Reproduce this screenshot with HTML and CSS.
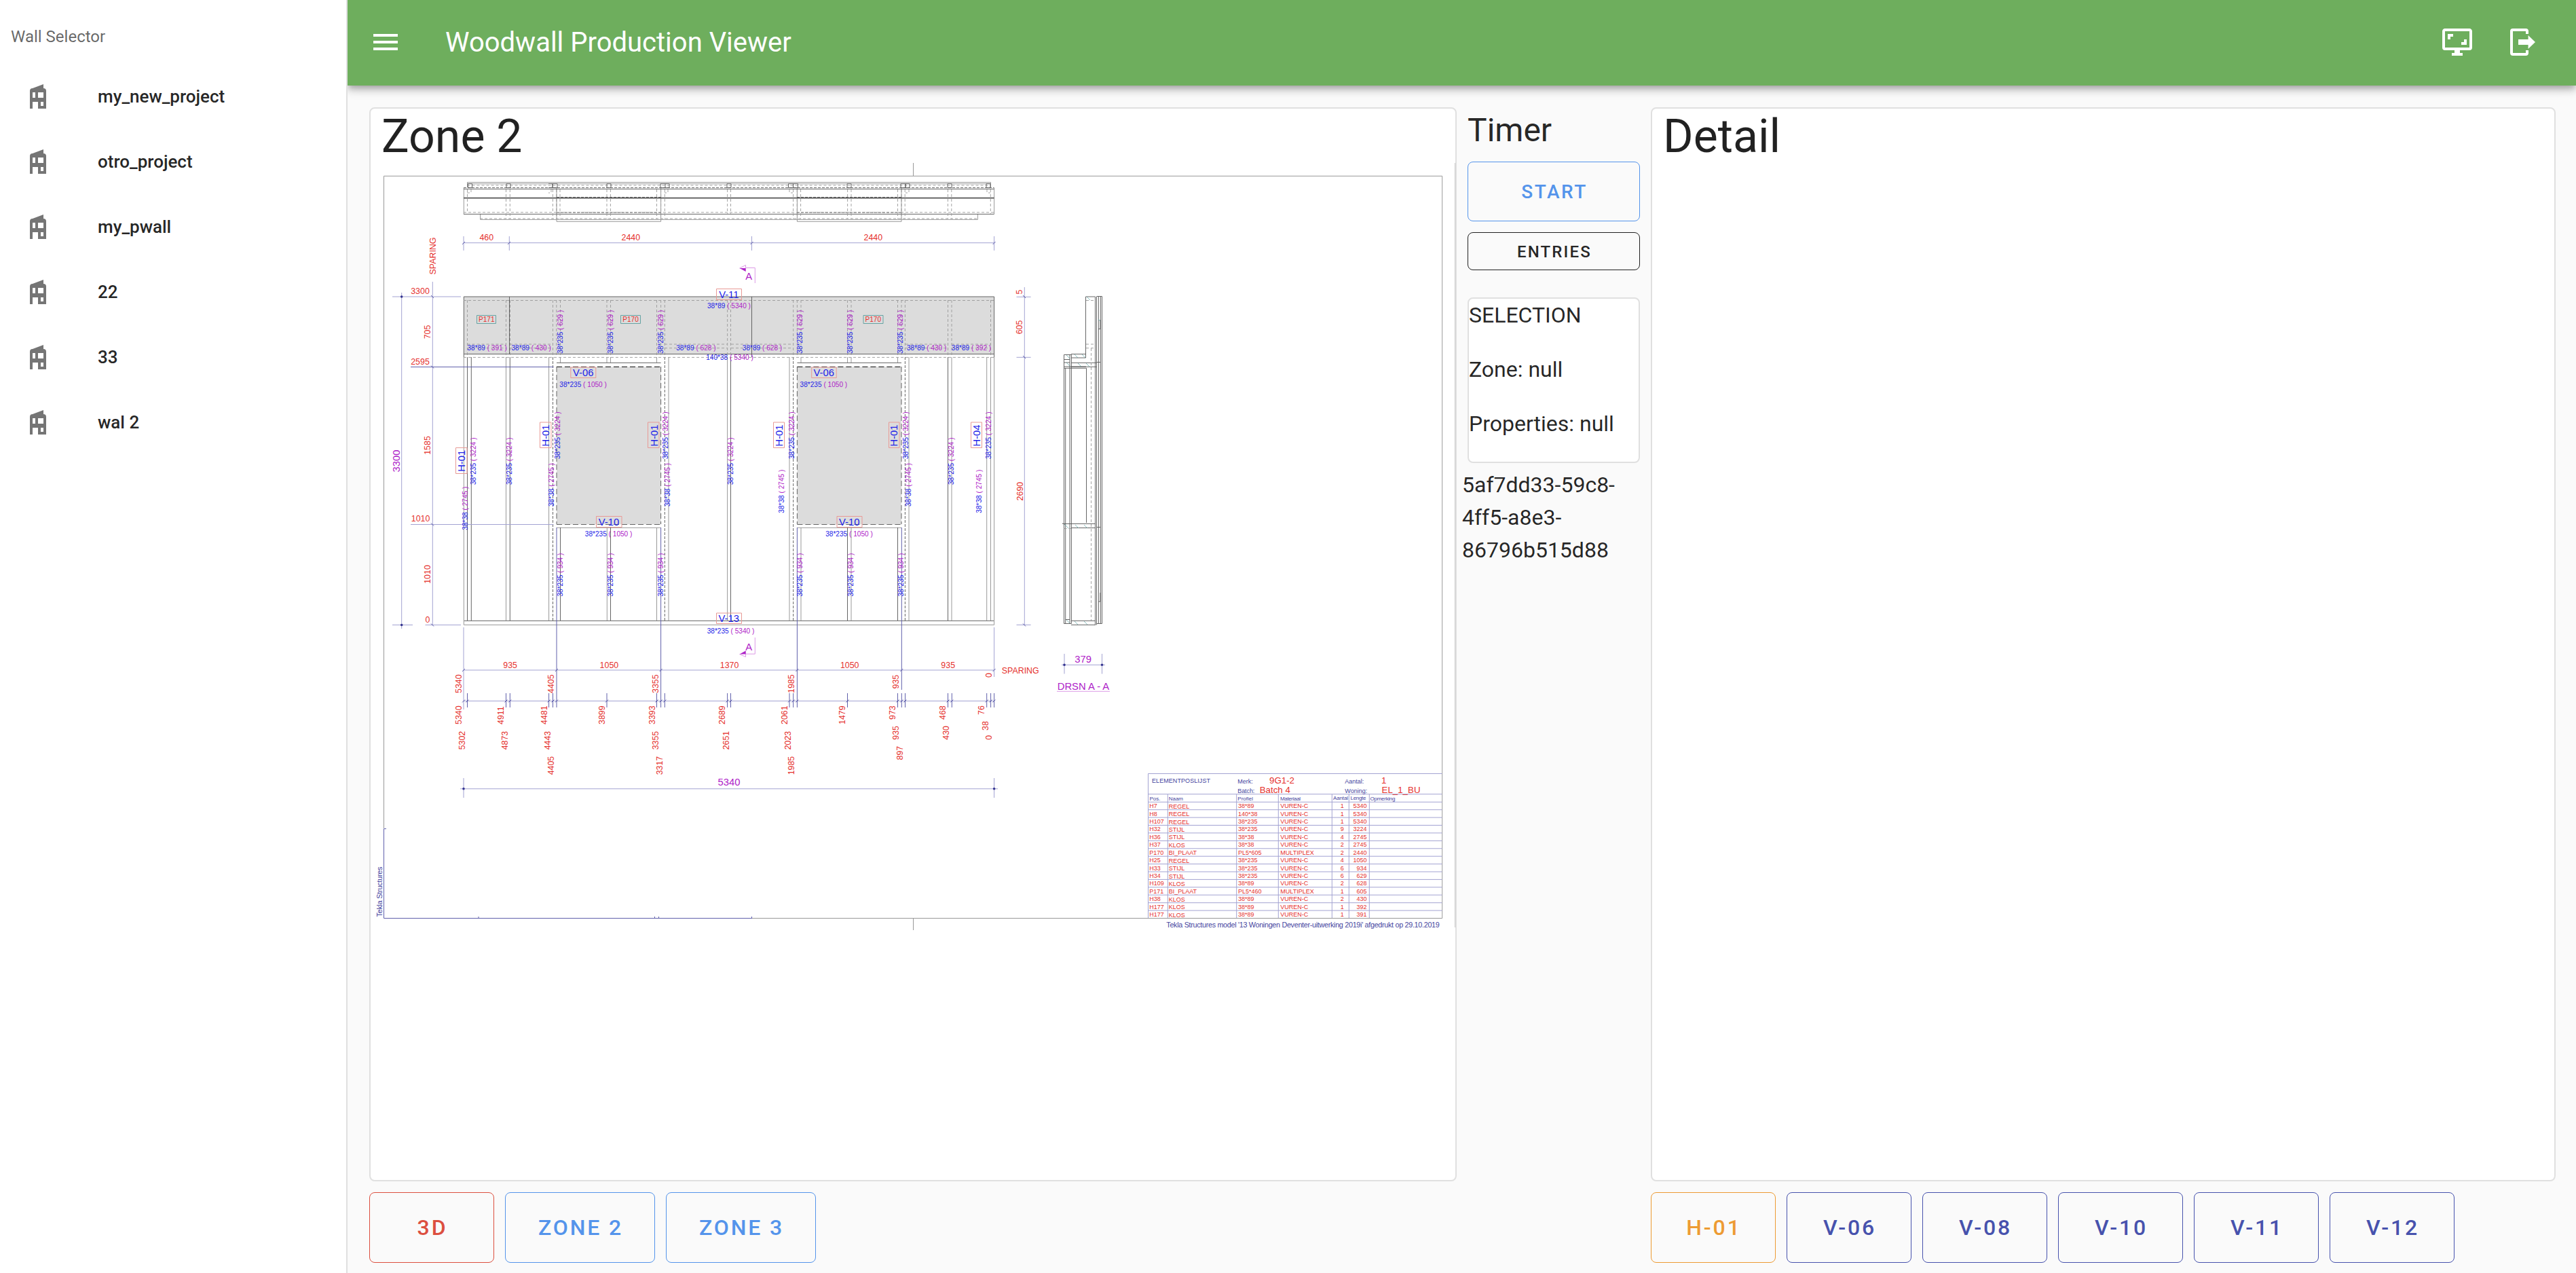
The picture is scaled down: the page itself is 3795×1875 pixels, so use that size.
FILE: index.html
```html
<!DOCTYPE html>
<html lang="en">
<head>
<meta charset="utf-8">
<title>Woodwall Production Viewer</title>
<link rel="stylesheet" href="styles.css">
</head>
<body>
<svg class="defs" aria-hidden="true">
  <symbol id="i-home" viewBox="0 0 24 24"><path d="M6,21V8A2,2 0 0,1 8,6L16,3V6A2,2 0 0,1 18,8V21H12V16H8V21H6M14,19H16V16H14V19M8,13H10V9H8V13M12,13H16V9H12V13Z"/></symbol>
</svg>
<div class="app">
  <aside class="drawer">
    <h2 class="drawer-title">Wall Selector</h2>
    <nav class="walls">
      <a class="wall"><svg class="icon"><use href="#i-home"/></svg><span>my_new_project</span></a>
      <a class="wall"><svg class="icon"><use href="#i-home"/></svg><span>otro_project</span></a>
      <a class="wall"><svg class="icon"><use href="#i-home"/></svg><span>my_pwall</span></a>
      <a class="wall"><svg class="icon"><use href="#i-home"/></svg><span>22</span></a>
      <a class="wall"><svg class="icon"><use href="#i-home"/></svg><span>33</span></a>
      <a class="wall"><svg class="icon"><use href="#i-home"/></svg><span>wal 2</span></a>
    </nav>
  </aside>
  <div class="page">
    <header class="bar">
      <svg class="icon" viewBox="0 0 24 24"><path d="M3,6H21V8H3V6M3,11H21V13H3V11M3,16H21V18H3V16Z"/></svg>
      <h1 class="bar-title">Woodwall Production Viewer</h1>
      <svg class="icon" viewBox="0 0 24 24"><path d="M9,6H5V10H7V8H9M19,10H17V12H15V14H19M21,16H3V4H21M21,2H3C1.89,2 1,2.89 1,4V16A2,2 0 0,0 3,18H10V20H8V22H16V20H14V18H21A2,2 0 0,0 23,16V4C23,2.89 22.1,2 21,2"/></svg>
      <svg class="icon" viewBox="0 0 24 24"><path d="M16.300,17V14H9V10H16.300V7L21.500,12L16.300,17M14.500,2A2,2 0 0,1 16.500,4V6H14.500V4H5V20H14.500V18H16.500V20A2,2 0 0,1 14.500,22H5A2,2 0 0,1 3,20V4A2,2 0 0,1 5,2H14.500Z"/></svg>
    </header>
    <main class="content">
      <section class="card">
        <h3 class="card-title">Zone 2</h3>
        <svg class="drawing" viewBox="546 240 1599 1130">
          <!-- sheet frame -->
          <path class="g" d="M565.5 1220V259.3H2124.7V1352.5H1107M1345.5 240V259M1345.5 1353V1370"/>
          <path class="edge" d="M2143.5 240V1366"/>
          <path class="n2" d="M569 1220.7H565.5V1352.5H1107M705 1350v3M964.5 1350v3M970.5 1350v3M1107.5 1350v3"/>
          <!-- panels and openings -->
          <path class="fill" d="M683.3 437H1464.6V521.3H683.3ZM820 540.3H973.6V772.5H820ZM1174.4 540.3H1328V772.5H1174.4Z"/>
          <!-- plan view -->
          <path class="g" d="M688.5 276V268.5H1459.5V276M688.5 270.8H1459.5M683.3 277V315.3M1464.6 277V315.3M707.6 315V323.4H1440.4V315M820 277V326.3H973.6V277M1174.4 277V326.3H1328V277"/>
          <path class="k" d="M683 278.4H1464.6M683 315.4H1464.6"/>
          <path class="kk" d="M683 291.7H1464.6"/>
          <path class="kd" d="M683 276.4H1464.6M820 290.5H973.6M1174 290.5H1328M820 313H973.6M1174 313H1328"/>
          <path class="gd" d="M683 312.8H1464.6M707 322H1440M688.5 273H1459M688.5 279V312M745.5 279V322M751.3 279V322M814.4 279V322M819.8 279V322M825 279V322M894 279V322M899.4 279V322M967.5 279V322M973.6 279V322M979.3 279V322M1071.6 279V315M1076.5 279V315M1168.6 279V322M1174.3 279V322M1179.6 279V322M1248.6 279V322M1254 279V322M1322.5 279V322M1328 279V322M1333.2 279V322M1396.4 279V322M1401.8 279V322M1459.3 279V315M694 279V284H688M812 279V284H808M984 279V284H979M1163 279V284H1168M1339 279V284H1334M1454 279V284H1459"/>
          <path class="k" d="M689.500 270.500h6v6h-6zM746 270.500h6v6h-6zM808 270.500h6v6h-6M814 270.500h7v6h-7zM894 270.500h6v6h-6zM973 270.500h7v6h-7zM980 270.500h6v6h-6M1071 270.500h6v6h-6zM1161.500 270.500h7v6h-7zM1168.500 270.500h7v6h-7zM1248 270.500h6v6h-6zM1327 270.500h7v6h-7zM1334 270.500h6v6h-6zM1396 270.500h6v6h-6zM1453 270.500h6v6h-6z"/>
          <!-- elevation -->
          <path class="k" d="M683.3 526V437H1464.6V526M683.3 521.5H1464.6M750.5 437V521M1107.5 437V526M820 534.4H973.6M1174.4 534.4H1328M683.3 914.4H1464.6"/>
          <path class="g" d="M683.3 526V920.4H1464.6V526M820 777.3H973.6M1174.4 777.3H1328M745.500 526V914M808.6 526V914M985 526V914M1071.600 526V914M1163 526V914M1339 526V914M1402 526V914M1453.700 526V914M1459.500 526V914M894.300 777V914M967.500 777V914M1180 777V914M1254 777V914M825.500 526V534M894 526V534M899.500 526V534M967.500 526V534M1180 526V534M1248.500 526V534M1254 526V534M1322.500 526V534"/>
          <path class="k" d="M688.500 526V914M694.300 526V914M751.300 526V914M1076.500 526V914M1396.500 526V914M825.500 777V914M899.500 777V914M1248.500 777V914M1322.500 777V914"/>
          <path class="kd" d="M814.500 526V914M979.300 526V914M1168.700 526V914M1333.400 526V914"/>
          <path class="kw" d="M820 540.3H973.6M1174.400 540.3H1328"/>
          <path class="kv" d="M820 540V772M973.600 540V772M1174.400 540V772M1328 540V772M820 772.500H973.600M1174.400 772.500H1328"/>
          <path class="gd" d="M683 442.500H1464M683 526.400H1464M688.500 507H745M688.500 512.700H745M751 507H814M751 512.700H814M979 507H1071M979 512.700H1071M1077 507H1168M1077 512.700H1168M1334 507H1396M1334 512.700H1396M1402 507H1459M1402 512.700H1459M688.500 442V526M745.500 442V526M751.500 442V526M814.500 442V526M819.800 442V526M825.500 442V526M894 442V526M899.500 442V526M967.500 442V526M973.600 442V526M979.300 442V526M1071.600 442V526M1076.500 442V526M1168.700 442V526M1174.400 442V526M1180 442V526M1248.500 442V526M1254 442V526M1322.500 442V526M1328 442V526M1333.400 442V526M1396.500 442V526M1402 442V526M1459.500 442V526"/>
          <!-- section A-A -->
          <path class="k" d="M1599.500 527V437H1613.500M1615.500 436.500H1623.500V918.500H1615.500M1613.500 437V920.500M1615.500 437V920.500M1618.400 437V918M1621.400 437V918M1567.500 918.500V522.500H1578.400V918.500H1567.500M1569.700 542V918M1576 522V918M1578 521.500H1599.500M1578 527H1599.500M1578 534.400H1615M1578 540.300H1615M1567.500 542.300H1600.500V770M1565.500 770.500V771.500H1614M1578 777.500H1614M1578 914.400H1614M1578 920.400H1614M1567.500 529.500H1576M1567.500 534H1576M1567.500 540H1600M1570 912.500H1576M1615.500 533.500H1621M1615.500 776.500H1621M1621 471V484.500H1618M1621 873V886H1618"/>
          <path class="gd" d="M1600 442.500H1613M1600 507H1613M1600 512.700H1613M1607.500 513V914M1567.500 778.500H1578"/>
          <path class="teal" d="M1583 522l5 5M1594 522l5 5M1588 535l5 5M1600 535l5 5M1571 534l5 5M1571 523l5 5M1568 772l6 6M1584 773l5 5M1597 773l5 5M1583 915l5 5M1597 915l5 5M1571 913l5 5M1601 437l5 5M1618 470l3 3"/>
          <!-- dimension lines -->
          <path class="n" d="M683 357.700H1464.600M683 348V369M1464.600 348V369M750.300 348V369M1107.500 348V369M578 437H679M591.700 431V926M637.300 415V921M578 920.500H608M626.500 920.500H679M605 772.500H815.500M683 924V1045M683 987H1464.600M683 1032.500H1464.600M1464.600 924V997M678 1161.800H1470M683 1146V1175M1464.600 1146V1175M1509.300 423V921M1497.500 437.300H1518.600M1497.500 526.300H1518.600M1497.500 920.400H1518.600M1564 979.300H1628M1568 963V992.500M1623.500 963V992.500"/>
          <path class="n2" d="M605 540.500H815.500M820 777V1042M973.600 777V1042M1174.400 777V1042M1328.300 777V1016M688.500 1021V1042M745.500 1021V1042M751.300 1021V1042M808.600 1021V1042M814.500 1021V1042M894 1021V1042M967.500 1021V1042M979.300 1021V1042M1071.600 1021V1042M1076.500 1021V1042M1163 1021V1042M1168.700 1021V1042M1248.500 1021V1042M1322.500 1021V1042M1328.300 1021V1042M1333.500 1021V1042M1396.500 1021V1042M1402.300 1021V1042M1453.700 1021V1042M1459.600 1021V1042M1464.600 1021V1042"/>
          <path class="n2" d="M681 360l4-4M748 360l4-4M1105.500 360l4-4M1462.600 360l4-4M635 435l4 4M635 538.500l4 4M635 770.500l4 4M635 918.500l4 4M681 989l4-4M818 989l4-4M971.600 989l4-4M1172.400 989l4-4M1326.300 989l4-4M1462.600 989l4-4M1507 435l4 4M1507 524l4 4M1507 918.500l4 4M681 1034.500l4-4M686.500 1034.500l4-4M743.500 1034.500l4-4M749.300 1034.500l4-4M806.600 1034.500l4-4M812.500 1034.500l4-4M818 1034.500l4-4M892 1034.500l4-4M965.500 1034.500l4-4M971.600 1034.500l4-4M977.300 1034.500l4-4M1069.600 1034.500l4-4M1074.500 1034.500l4-4M1161 1034.500l4-4M1166.700 1034.500l4-4M1172.400 1034.500l4-4M1246.500 1034.500l4-4M1320.500 1034.500l4-4M1326.300 1034.500l4-4M1331.500 1034.500l4-4M1394.500 1034.500l4-4M1400.300 1034.500l4-4M1451.700 1034.500l4-4M1457.600 1034.500l4-4M1462.600 1034.500l4-4"/>
          <g class="dot"><circle cx="591.700" cy="437" r="1.800"/><circle cx="591.700" cy="920.500" r="1.800"/><circle cx="683" cy="1161.800" r="1.800"/><circle cx="1464.600" cy="1161.800" r="1.800"/><circle cx="1568" cy="979.300" r="1.800"/><circle cx="1623.500" cy="979.300" r="1.800"/></g>
          <!-- section marks -->
          <path class="m" d="M1112.300 417V394.500H1098.500V390.500L1089.500 395M1112.300 939V963.200H1098.500V967.500L1089.500 963.500M1557 1018.300H1635"/>
          <path class="mf" d="M1089.500 395H1098.700V400ZM1089.500 963.500H1098.700V958.600Z"/>
          <!-- tag boxes -->
          <path class="tag" d="M1055.500 425.500h37v16h-37zM840.800 541h37v15.500h-37zM1195.700 541h36.500v15.500h-36.500zM878.500 760.500h37.500v16h-37.500zM1233 760.500h37v16h-37zM1055.500 903h37v15.500h-37zM671.500 659.500h16.500v38h-16.500zM795.500 622h16.500v37.500h-16.500zM954.500 622h16.500v37.500h-16.500zM1139.500 622h16v37.500h-16zM1309.500 622h15.500v37.500h-15.500zM1430.500 622h16v37.500h-16z"/>
          <path class="tagp" d="M702.500 464.500h28v12h-28zM914.500 464.500h29v12h-29zM1272 464.500h29v12h-29z"/>
          <g class="t r c">
            <text x="716.800" y="354.300">460</text><text x="929.300" y="354.300">2440</text><text x="1286.300" y="354.300">2440</text>
            <text x="619" y="433.300">3300</text><text x="619" y="536.700">2595</text><text x="619.600" y="768">1010</text><text x="630" y="916.500">0</text>
            <text x="751.600" y="984">935</text><text x="897.400" y="984">1050</text><text x="1074.600" y="984">1370</text><text x="1251.700" y="984">1050</text><text x="1396.700" y="984">935</text><text x="1503.300" y="991.800">SPARING</text>
            <text transform="translate(642.200 377) rotate(-90)">SPARING</text>
            <text transform="translate(634 489) rotate(-90)">705</text><text transform="translate(634 656) rotate(-90)">1585</text><text transform="translate(634 846) rotate(-90)">1010</text>
            <text transform="translate(1506.400 430) rotate(-90)">5</text><text transform="translate(1506.400 482) rotate(-90)">605</text><text transform="translate(1507 723.600) rotate(-90)">2690</text>
          </g>
          <g class="t r">
            <text transform="translate(679.700 1021) rotate(-90)">5340</text><text transform="translate(816.300 1021) rotate(-90)">4405</text><text transform="translate(970 1021) rotate(-90)">3355</text><text transform="translate(1170.300 1021) rotate(-90)">1985</text><text transform="translate(1324.200 1014.500) rotate(-90)">935</text><text transform="translate(1461 998) rotate(-90)">0</text>
            <text transform="translate(679.700 1067) rotate(-90)">5340</text><text transform="translate(742.400 1067) rotate(-90)">4911</text><text transform="translate(806 1067) rotate(-90)">4481</text><text transform="translate(890.500 1067) rotate(-90)">3899</text><text transform="translate(964.800 1067) rotate(-90)">3393</text><text transform="translate(1068 1067) rotate(-90)">2689</text><text transform="translate(1159.600 1067) rotate(-90)">2061</text><text transform="translate(1244.700 1067) rotate(-90)">1479</text><text transform="translate(1319 1060) rotate(-90)">973</text><text transform="translate(1393 1060) rotate(-90)">468</text><text transform="translate(1450 1053) rotate(-90)">76</text>
            <text transform="translate(685.400 1104.300) rotate(-90)">5302</text><text transform="translate(748.200 1104.300) rotate(-90)">4873</text><text transform="translate(810.600 1104.300) rotate(-90)">4443</text><text transform="translate(970 1104.300) rotate(-90)">3355</text><text transform="translate(1073.500 1104.300) rotate(-90)">2651</text><text transform="translate(1165 1104.300) rotate(-90)">2023</text><text transform="translate(1324.200 1089.700) rotate(-90)">935</text><text transform="translate(1398 1089.700) rotate(-90)">430</text><text transform="translate(1455.500 1076) rotate(-90)">38</text>
            <text transform="translate(816.300 1141.300) rotate(-90)">4405</text><text transform="translate(976.300 1141.300) rotate(-90)">3317</text><text transform="translate(1170.300 1141.300) rotate(-90)">1985</text><text transform="translate(1329.700 1119.500) rotate(-90)">897</text><text transform="translate(1461 1089.700) rotate(-90)">0</text>
          </g>
          <g class="t big p c">
            <text transform="translate(588.600 679) rotate(-90)">3300</text><text x="1074" y="1156.800">5340</text><text x="1595.700" y="976">379</text><text x="1596" y="1016">DRSN A - A</text><text x="1103.300" y="411.700">A</text><text x="1103.300" y="958">A</text>
          </g>
          <g class="t big b c">
            <text x="1073.800" y="439">V-11</text><text x="859.200" y="553.700">V-06</text><text x="1213.800" y="553.700">V-06</text><text x="897" y="774.300">V-10</text><text x="1251.300" y="774.300">V-10</text><text x="1073.800" y="916">V-13</text>
            <text transform="translate(685.400 678.800) rotate(-90)">H-01</text><text transform="translate(809.400 641.500) rotate(-90)">H-01</text><text transform="translate(968.600 641.500) rotate(-90)">H-01</text><text transform="translate(1153.300 641.500) rotate(-90)">H-01</text><text transform="translate(1322.300 641.500) rotate(-90)">H-01</text><text transform="translate(1444.400 641.500) rotate(-90)">H-04</text>
          </g>
          <g class="t sm r c"><text x="716.800" y="474">P171</text><text x="929" y="474">P170</text><text x="1286.300" y="474">P170</text></g>
          <g class="t sm b">
            <text x="688.500" y="515.700">38*89 <tspan class="p">( 391 )</tspan></text><text x="753.500" y="515.700">38*89 <tspan class="p">( 430 )</tspan></text><text x="996.200" y="515.700">38*89 <tspan class="p">( 628 )</tspan></text><text x="1093.800" y="515.700">38*89 <tspan class="p">( 628 )</tspan></text><text x="1336" y="515.700">38*89 <tspan class="p">( 430 )</tspan></text><text x="1401.800" y="515.700">38*89 <tspan class="p">( 392 )</tspan></text>
            <text x="1042" y="454.300">38*89 <tspan class="p">( 5340 )</tspan></text><text x="1040.200" y="529.700">140*38 <tspan class="p">( 5340 )</tspan></text>
            <text x="824.300" y="569.700">38*235 <tspan class="p">( 1050 )</tspan></text><text x="1178.600" y="569.700">38*235 <tspan class="p">( 1050 )</tspan></text>
            <text x="861.800" y="789.600">38*235 <tspan class="p">( 1050 )</tspan></text><text x="1216.200" y="789.600">38*235 <tspan class="p">( 1050 )</tspan></text><text x="1041.700" y="932.500">38*235 <tspan class="p">( 5340 )</tspan></text>
            <text transform="translate(828.600 520.700) rotate(-90)">38*235 <tspan class="p">( 629 )</tspan></text><text transform="translate(902.800 520.700) rotate(-90)">38*235 <tspan class="p">( 629 )</tspan></text><text transform="translate(977 520.700) rotate(-90)">38*235 <tspan class="p">( 629 )</tspan></text><text transform="translate(1182 520.700) rotate(-90)">38*235 <tspan class="p">( 629 )</tspan></text><text transform="translate(1256.400 520.700) rotate(-90)">38*235 <tspan class="p">( 629 )</tspan></text><text transform="translate(1330.400 520.700) rotate(-90)">38*235 <tspan class="p">( 629 )</tspan></text>
            <text transform="translate(701 714) rotate(-90)">38*235 <tspan class="p">( 3224 )</tspan></text><text transform="translate(754.300 714) rotate(-90)">38*235 <tspan class="p">( 3224 )</tspan></text><text transform="translate(1080 714) rotate(-90)">38*235 <tspan class="p">( 3224 )</tspan></text><text transform="translate(1404.500 714) rotate(-90)">38*235 <tspan class="p">( 3224 )</tspan></text>
            <text transform="translate(824.700 676) rotate(-90)">38*235 <tspan class="p">( 3224 )</tspan></text><text transform="translate(984 676) rotate(-90)">38*235 <tspan class="p">( 3224 )</tspan></text><text transform="translate(1169.500 676) rotate(-90)">38*235 <tspan class="p">( 3224 )</tspan></text><text transform="translate(1338.300 676) rotate(-90)">38*235 <tspan class="p">( 3224 )</tspan></text><text transform="translate(1459.600 676) rotate(-90)">38*235 <tspan class="p">( 3224 )</tspan></text>
            <text transform="translate(689 780.700) rotate(-90)">38*38 <tspan class="p">( 2745 )</tspan></text><text transform="translate(816.300 746) rotate(-90)">38*38 <tspan class="p">( 2745 )</tspan></text><text transform="translate(987 746) rotate(-90)">38*38 <tspan class="p">( 2745 )</tspan></text><text transform="translate(1341.600 746) rotate(-90)">38*38 <tspan class="p">( 2745 )</tspan></text><text transform="translate(1155 755.700) rotate(-90)">38*38 <tspan class="p">( 2745 )</tspan></text><text transform="translate(1446 755.700) rotate(-90)">38*38 <tspan class="p">( 2745 )</tspan></text>
            <text transform="translate(828.600 878.600) rotate(-90)">38*235 <tspan class="p">( 934 )</tspan></text><text transform="translate(902.800 878.600) rotate(-90)">38*235 <tspan class="p">( 934 )</tspan></text><text transform="translate(976.700 878.600) rotate(-90)">38*235 <tspan class="p">( 934 )</tspan></text><text transform="translate(1182 878.600) rotate(-90)">38*235 <tspan class="p">( 934 )</tspan></text><text transform="translate(1256.500 878.600) rotate(-90)">38*235 <tspan class="p">( 934 )</tspan></text><text transform="translate(1330.500 878.600) rotate(-90)">38*235 <tspan class="p">( 934 )</tspan></text>
          </g>
          <!-- parts list -->
          <path class="n" d="M1691.500 1352V1139.500H2124.500M1691.500 1169.700H2124.500M1691.500 1181.300H2124.500M1691.500 1192.700H2124.500M1691.500 1204.100H2124.500M1691.500 1215.500H2124.500M1691.500 1226.900H2124.500M1691.500 1238.400H2124.500M1691.500 1249.800H2124.500M1691.500 1261.200H2124.500M1691.500 1272.600H2124.500M1691.500 1284H2124.500M1691.500 1295.400H2124.500M1691.500 1306.800H2124.500M1691.500 1318.200H2124.500M1691.500 1329.700H2124.500M1691.500 1341.100H2124.500M1720.300 1170V1352M1821.700 1170V1352M1883.300 1170V1352M1962.300 1170V1352M1987.300 1170V1352M2017.300 1170V1352"/>
          <g class="t tb v">
            <text x="1697" y="1152.700" textLength="86">ELEMENTPOSLIJST</text><text x="1823.300" y="1153.700">Merk:</text><text x="1823.300" y="1167.700" textLength="25">Batch:</text><text x="1981.300" y="1153.700" textLength="28">Aantal:</text><text x="1981.300" y="1167.700" textLength="33">Woning:</text>
          </g>
          <g class="t th v"><text x="1693.500" y="1178.500">Pos.</text><text x="1721.700" y="1179">Naam</text><text x="1823.300" y="1178.500">Profiel</text><text x="1886" y="1178.500" textLength="30">Materiaal</text><text x="1964" y="1178" textLength="22">Aantal</text><text x="1989.500" y="1178" textLength="23">Lengte</text><text x="2018.500" y="1178.500" textLength="37">Opmerking</text></g>
          <g class="t tv r"><text x="1870" y="1154">9G1-2</text><text x="1855.700" y="1168">Batch 4</text><text x="2035" y="1154">1</text><text x="2035.500" y="1168" textLength="57">EL_1_BU</text></g>
          <g class="t tb r">
            <text><tspan x="1693.300" y="1190.200">H7</tspan><tspan x="1693.300" dy="11.420">H8</tspan><tspan x="1693.300" dy="11.420">H107</tspan><tspan x="1693.300" dy="11.420">H32</tspan><tspan x="1693.300" dy="11.420">H36</tspan><tspan x="1693.300" dy="11.420">H37</tspan><tspan x="1693.300" dy="11.420">P170</tspan><tspan x="1693.300" dy="11.420">H25</tspan><tspan x="1693.300" dy="11.420">H33</tspan><tspan x="1693.300" dy="11.420">H34</tspan><tspan x="1693.300" dy="11.420">H109</tspan><tspan x="1693.300" dy="11.420">P171</tspan><tspan x="1693.300" dy="11.420">H38</tspan><tspan x="1693.300" dy="11.420">H177</tspan><tspan x="1693.300" dy="11.420">H177</tspan></text>
            <text><tspan x="1721.700" y="1190.800">REGEL</tspan><tspan x="1721.700" dy="11.420">REGEL</tspan><tspan x="1721.700" dy="11.420">REGEL</tspan><tspan x="1721.700" dy="11.420">STIJL</tspan><tspan x="1721.700" dy="11.420">STIJL</tspan><tspan x="1721.700" dy="11.420">KLOS</tspan><tspan x="1721.700" dy="11.420">BI_PLAAT</tspan><tspan x="1721.700" dy="11.420">REGEL</tspan><tspan x="1721.700" dy="11.420">STIJL</tspan><tspan x="1721.700" dy="11.420">STIJL</tspan><tspan x="1721.700" dy="11.420">KLOS</tspan><tspan x="1721.700" dy="11.420">BI_PLAAT</tspan><tspan x="1721.700" dy="11.420">KLOS</tspan><tspan x="1721.700" dy="11.420">KLOS</tspan><tspan x="1721.700" dy="11.420">KLOS</tspan></text>
            <text><tspan x="1824" y="1190.200">38*89</tspan><tspan x="1824" dy="11.420">140*38</tspan><tspan x="1824" dy="11.420">38*235</tspan><tspan x="1824" dy="11.420">38*235</tspan><tspan x="1824" dy="11.420">38*38</tspan><tspan x="1824" dy="11.420">38*38</tspan><tspan x="1824" dy="11.420">PL5*605</tspan><tspan x="1824" dy="11.420">38*235</tspan><tspan x="1824" dy="11.420">38*235</tspan><tspan x="1824" dy="11.420">38*235</tspan><tspan x="1824" dy="11.420">38*89</tspan><tspan x="1824" dy="11.420">PL5*460</tspan><tspan x="1824" dy="11.420">38*89</tspan><tspan x="1824" dy="11.420">38*89</tspan><tspan x="1824" dy="11.420">38*89</tspan></text>
            <text><tspan x="1886.300" y="1190.200">VUREN-C</tspan><tspan x="1886.300" dy="11.420">VUREN-C</tspan><tspan x="1886.300" dy="11.420">VUREN-C</tspan><tspan x="1886.300" dy="11.420">VUREN-C</tspan><tspan x="1886.300" dy="11.420">VUREN-C</tspan><tspan x="1886.300" dy="11.420">VUREN-C</tspan><tspan x="1886.300" dy="11.420">MULTIPLEX</tspan><tspan x="1886.300" dy="11.420">VUREN-C</tspan><tspan x="1886.300" dy="11.420">VUREN-C</tspan><tspan x="1886.300" dy="11.420">VUREN-C</tspan><tspan x="1886.300" dy="11.420">VUREN-C</tspan><tspan x="1886.300" dy="11.420">MULTIPLEX</tspan><tspan x="1886.300" dy="11.420">VUREN-C</tspan><tspan x="1886.300" dy="11.420">VUREN-C</tspan><tspan x="1886.300" dy="11.420">VUREN-C</tspan></text>
            <text class="c"><tspan x="1977.300" y="1190.200">1</tspan><tspan x="1977.300" dy="11.420">1</tspan><tspan x="1977.300" dy="11.420">1</tspan><tspan x="1977.300" dy="11.420">9</tspan><tspan x="1977.300" dy="11.420">4</tspan><tspan x="1977.300" dy="11.420">2</tspan><tspan x="1977.300" dy="11.420">2</tspan><tspan x="1977.300" dy="11.420">4</tspan><tspan x="1977.300" dy="11.420">6</tspan><tspan x="1977.300" dy="11.420">6</tspan><tspan x="1977.300" dy="11.420">2</tspan><tspan x="1977.300" dy="11.420">1</tspan><tspan x="1977.300" dy="11.420">2</tspan><tspan x="1977.300" dy="11.420">1</tspan><tspan x="1977.300" dy="11.420">1</tspan></text>
            <text class="e"><tspan x="2013.500" y="1190.200">5340</tspan><tspan x="2013.500" dy="11.420">5340</tspan><tspan x="2013.500" dy="11.420">5340</tspan><tspan x="2013.500" dy="11.420">3224</tspan><tspan x="2013.500" dy="11.420">2745</tspan><tspan x="2013.500" dy="11.420">2745</tspan><tspan x="2013.500" dy="11.420">2440</tspan><tspan x="2013.500" dy="11.420">1050</tspan><tspan x="2013.500" dy="11.420">934</tspan><tspan x="2013.500" dy="11.420">629</tspan><tspan x="2013.500" dy="11.420">628</tspan><tspan x="2013.500" dy="11.420">605</tspan><tspan x="2013.500" dy="11.420">430</tspan><tspan x="2013.500" dy="11.420">392</tspan><tspan x="2013.500" dy="11.420">391</tspan></text>
          </g>
          <g class="t ft v"><text x="1718.300" y="1366" textLength="402.500">Tekla Structures model '13 Woningen Deventer-uitwerking 2019i' afgedrukt op 29.10.2019</text><text transform="translate(563 1350.500) rotate(-90)" textLength="74">Tekla Structures</text></g>
        </svg>
      </section>
      <section class="side">
        <h3 class="side-title">Timer</h3>
        <button class="btn large blue">START</button>
        <button class="btn small dark">ENTRIES</button>
        <div class="selection">
          <p>SELECTION</p>
          <p>Zone: null</p>
          <p>Properties: null</p>
        </div>
        <div class="uuid">5af7dd33-59c8-4ff5-a8e3-86796b515d88</div>
      </section>
      <section class="card">
        <h3 class="card-title">Detail</h3>
      </section>
      <div class="buttons">
        <button class="btn red">3D</button>
        <button class="btn blue">ZONE 2</button>
        <button class="btn blue">ZONE 3</button>
      </div>
      <div></div>
      <div class="buttons">
        <button class="btn orange">H-01</button>
        <button class="btn indigo">V-06</button>
        <button class="btn indigo">V-08</button>
        <button class="btn indigo">V-10</button>
        <button class="btn indigo">V-11</button>
        <button class="btn indigo">V-12</button>
      </div>
    </main>
  </div>
</div>
</body>
</html>
```
FILE: styles.css
```css
* { box-sizing: border-box; }
body {
  margin: 0;
  font-family: Roboto, sans-serif;
  font-size: 32px;
  line-height: 48px;
  color: rgba(0, 0, 0, .87);
  background: #fafafa;
}
h1, h2, h3, p { margin: 0; font-weight: 400; }
.defs { display: none; }
.app { display: flex; height: 1875px; overflow: hidden; }

/* navigation drawer */
.drawer {
  flex: none;
  width: 512px;
  background: #fff;
  border-right: 2px solid #e0e0e0;
  position: relative;
  z-index: 2;
}
.drawer-title {
  height: 94px;
  padding: 30px 16px 0;
  font-size: 24px;
  color: rgba(0, 0, 0, .6);
}
.wall {
  display: flex;
  align-items: center;
  gap: 64px;
  height: 96px;
  padding-left: 32px;
  font-size: 26px;
  font-weight: 500;
}
.icon { flex: none; display: block; width: 48px; height: 48px; fill: currentColor; }
.wall .icon { color: #757575; }

/* app bar */
.page { flex: 1; display: flex; flex-direction: column; min-width: 0; }
.bar {
  flex: none;
  display: flex;
  align-items: center;
  gap: 48px;
  height: 126px;
  padding: 0 55px 2px 32px;
  color: #fff;
  background: #6eae5d;
  box-shadow: 0 4px 8px -2px rgba(0, 0, 0, .2), 0 8px 10px rgba(0, 0, 0, .14), 0 2px 20px rgba(0, 0, 0, .12);
}
.bar-title { flex: 1; margin-left: 16px; padding-top: 2px; font-size: 40px; line-height: 60px; }

/* content grid */
.content {
  display: grid;
  grid-template-columns: 1602px 286px 1333px;
  grid-template-rows: 1582px 104px;
  row-gap: 16px;
  padding: 32px 30px 0 32px;
}
.card { background: #fff; border: 2px solid #e0e0e0; border-radius: 8px; }
.card-title { height: 80px; padding-left: 16px; font-size: 68px; line-height: 83px; }
.side { padding: 0 16px; }
.side-title { height: 80px; font-size: 48px; line-height: 67px; }
.selection {
  margin-top: 40px;
  background: #fff;
  border: 2px solid #e0e0e0;
  border-radius: 8px;
}
.selection p { margin-bottom: 32px; }
.uuid { margin: 8px -8px 0; }

.buttons { display: flex; gap: 16px; }
.btn {
  height: 104px;
  min-width: 184px;
  padding: 0 46px 0 48px;
  border: 1px solid currentColor;
  border-radius: 8px;
  background: none;
  font: 500 32px Roboto, sans-serif;
  letter-spacing: .0892857em;
}
.large { display: block; width: 100%; height: 88px; font-size: 28px; }
.small { display: block; width: 100%; height: 56px; margin-top: 16px; padding-top: 2px; font-size: 24px; }
.blue { color: #5494eb; }
.dark { color: rgba(0, 0, 0, .87); }
.red { color: #dc4f3f; }
.orange { color: #ed9b33; }
.indigo { color: #4752ad; }

/* technical drawing */
.drawing { display: block; width: 1599px; height: 1130px; margin-right: -1px; font-family: "Liberation Sans", sans-serif; }
.drawing path { fill: none; }
.drawing .g { stroke: #999; stroke-width: 1; }
.drawing .edge { stroke: #ccc; stroke-width: 1; }
.drawing .k { stroke: #555; stroke-width: .9; }
.drawing .kk { stroke: #555; stroke-width: 1.7; }
.drawing .kd { stroke: #555; stroke-width: .9; stroke-dasharray: 4 2; }
.drawing .kw { stroke: #333; stroke-width: 1.2; stroke-dasharray: 8 4; }
.drawing .kv { stroke: #555; stroke-width: .9; stroke-dasharray: 8 4; }
.drawing .gd { stroke: #999; stroke-width: .9; stroke-dasharray: 4 3; }
.drawing .n { stroke: #a3a3d2; stroke-width: 1; }
.drawing .n2 { stroke: #6060ac; stroke-width: 1; }
.drawing .m { stroke: #dc9be6; stroke-width: 1; }
.drawing .teal { stroke: #59a5a5; stroke-width: .7; }
.drawing .tag { stroke: #e89a96; stroke-width: 1; }
.drawing .tagp { stroke: #66a3a3; stroke-width: 1; }
.drawing .fill { fill: #dcdcdc; }
.drawing .mf { fill: #ae22c8; }
.dot { fill: #33338f; }
.t { font-size: 12.4px; }
.sm { font-size: 10.1px; }
.big { font-size: 14.8px; }
.tb { font-size: 9px; }
.th { font-size: 8px; }
.tv { font-size: 13.3px; }
.ft { font-size: 10.8px; }
.r { fill: #e52f2c; }
.b { fill: #2222e8; }
.p { fill: #ae22c8; }
.v { fill: #4545a0; }
.c { text-anchor: middle; }
.e { text-anchor: end; }
```
